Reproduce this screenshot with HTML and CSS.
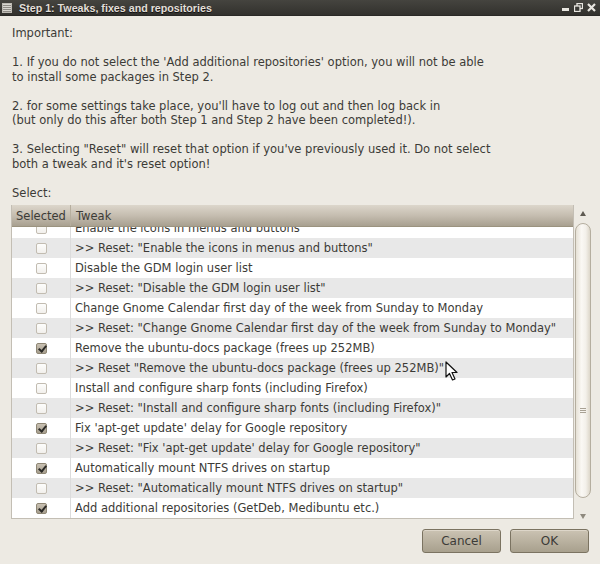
FILE: index.html
```html
<!DOCTYPE html>
<html>
<head>
<meta charset="utf-8">
<link rel="stylesheet" href="styles.css">
</head>
<body>
<div class="window">
  <div class="titlebar">
    <span class="app-icon"></span>
    <span class="title">Step 1: Tweaks, fixes and repositories</span>
    <div class="controls">
      <svg width="9" height="9" viewBox="0 0 9 9"><rect x="1" y="5" width="7" height="3" fill="#e8e6e0"/></svg>
      <svg width="9" height="9" viewBox="0 0 9 9"><rect x="3" y="0.5" width="5.5" height="5" fill="none" stroke="#e8e6e0" stroke-width="1.3"/><rect x="0.5" y="3" width="5.5" height="5.5" fill="#3a3935" stroke="#e8e6e0" stroke-width="1.3"/></svg>
      <svg width="9" height="9" viewBox="0 0 9 9"><path d="M1 1 L8 8 M8 1 L1 8" stroke="#e8e6e0" stroke-width="2.2"/></svg>
    </div>
  </div>
  <div class="content">
    <p class="intro">Important:<br><br>1. If you do not select the 'Add additional repositories' option, you will not be able<br>to install some packages in Step 2.<br><br>2. for some settings take place, you'll have to log out and then log back in<br>(but only do this after both Step 1 and Step 2 have been completed!).<br><br>3. Selecting "Reset" will reset that option if you've previously used it. Do not select<br>both a tweak and it's reset option!<br><br>Select:</p>
    <div class="listwrap">
      <div class="list">
        <div class="header">
          <div class="hcell sel">Selected</div>
          <div class="hcell tw">Tweak</div>
        </div>
        <div class="viewport">
          <div class="rows">
            <div class="row"><div class="cell sel"><span class="cb"></span></div><div class="cell tw">Enable the icons in menus and buttons</div></div>
            <div class="row"><div class="cell sel"><span class="cb"></span></div><div class="cell tw">&gt;&gt; Reset: "Enable the icons in menus and buttons"</div></div>
            <div class="row"><div class="cell sel"><span class="cb"></span></div><div class="cell tw">Disable the GDM login user list</div></div>
            <div class="row"><div class="cell sel"><span class="cb"></span></div><div class="cell tw">&gt;&gt; Reset: "Disable the GDM login user list"</div></div>
            <div class="row"><div class="cell sel"><span class="cb"></span></div><div class="cell tw">Change Gnome Calendar first day of the week from Sunday to Monday</div></div>
            <div class="row"><div class="cell sel"><span class="cb"></span></div><div class="cell tw">&gt;&gt; Reset: "Change Gnome Calendar first day of the week from Sunday to Monday"</div></div>
            <div class="row"><div class="cell sel"><span class="cb on"></span></div><div class="cell tw">Remove the ubuntu-docs package (frees up 252MB)</div></div>
            <div class="row"><div class="cell sel"><span class="cb"></span></div><div class="cell tw">&gt;&gt; Reset "Remove the ubuntu-docs package (frees up 252MB)"</div></div>
            <div class="row"><div class="cell sel"><span class="cb"></span></div><div class="cell tw">Install and configure sharp fonts (including Firefox)</div></div>
            <div class="row"><div class="cell sel"><span class="cb"></span></div><div class="cell tw">&gt;&gt; Reset: "Install and configure sharp fonts (including Firefox)"</div></div>
            <div class="row"><div class="cell sel"><span class="cb on"></span></div><div class="cell tw">Fix 'apt-get update' delay for Google repository</div></div>
            <div class="row"><div class="cell sel"><span class="cb"></span></div><div class="cell tw">&gt;&gt; Reset: "Fix 'apt-get update' delay for Google repository"</div></div>
            <div class="row"><div class="cell sel"><span class="cb on"></span></div><div class="cell tw">Automatically mount NTFS drives on startup</div></div>
            <div class="row"><div class="cell sel"><span class="cb"></span></div><div class="cell tw">&gt;&gt; Reset: "Automatically mount NTFS drives on startup"</div></div>
            <div class="row"><div class="cell sel"><span class="cb on"></span></div><div class="cell tw">Add additional repositories (GetDeb, Medibuntu etc.)</div></div>
          </div>
        </div>
      </div>
      <div class="scrollbar">
        <span class="arrow up"></span>
        <div class="trough"><div class="thumb"><span class="grip"></span></div></div>
        <span class="arrow down"></span>
      </div>
    </div>
    <div class="buttons">
      <button class="btn">Cancel</button>
      <button class="btn">OK</button>
    </div>
  </div>
  <svg class="cursor" width="14" height="20" viewBox="0 0 14 20"><path d="M1 1 L1 16 L4.5 12.5 L7.5 19 L10 18 L7 11.5 L12 11.5 Z" fill="#fff" stroke="#111" stroke-width="1.2" stroke-linejoin="round"/></svg>
</div>
</body>
</html>
```
FILE: styles.css
```css
html, body {
  margin: 0;
  padding: 0;
}
body {
  background: #edeae3;
  font-family: "DejaVu Sans", sans-serif;
  font-size: 11.5px;
  color: #3c3b37;
}
.window {
  position: relative;
  width: 600px;
  height: 564px;
  overflow: hidden;
}
.titlebar {
  height: 15px;
  background: linear-gradient(#45443f, #32312d);
  display: flex;
  align-items: center;
  padding: 0 4px 0 2px;
  border-bottom: 1px solid #2a2926;
}
.app-icon {
  width: 10px;
  height: 10px;
  margin-right: 7px;
  background: repeating-linear-gradient(#d8d6d0 0 1px, #8f8c86 1px 2px);
  border: 1px solid #bdbab3;
  box-sizing: border-box;
}
.title {
  color: #e2dfd7;
  font-family: "Liberation Sans", Arial, sans-serif;
  font-weight: bold;
  font-size: 10.7px;
  text-shadow: 0 1px 0 #111;
  flex: 1;
}
.controls {
  display: flex;
  gap: 4px;
  align-items: center;
}
.content {
  padding: 10px 12px 0 12px;
}
.intro {
  margin: 0;
  line-height: 14.5px;
}
.listwrap {
  display: flex;
  margin-top: 5px;
  margin-left: -1px;
  margin-right: -10px;
  height: 314px;
}
.list {
  width: 563px;
  border: 1px solid #c3beb4;
  border-top: none;
  box-sizing: border-box;
  background: #fff;
  display: flex;
  flex-direction: column;
}
.header {
  height: 22px;
  display: flex;
  background: linear-gradient(#dcd6cb, #c5bdb0 50%, #a8a090);
  border-bottom: 1px solid #9b937f;
  box-sizing: border-box;
  color: #3c3b37;
}
.hcell {
  display: flex;
  align-items: center;
}
.hcell.sel {
  width: 54px;
  padding-left: 4px;
  border-right: 1px solid #b6ae9e;
}
.hcell.tw {
  padding-left: 5px;
  flex: 1;
}
.viewport {
  flex: 1;
  overflow: hidden;
}
.rows {
  margin-top: -9px;
}
.row {
  height: 20px;
  display: flex;
}
.row:nth-child(even) {
  background: #e8e8e8;
}
.cell {
  display: flex;
  align-items: center;
}
.cell.sel {
  width: 58px;
  justify-content: center;
  border-right: 1px solid #dcdcdc;
}
.cell.tw {
  padding-left: 4px;
  white-space: nowrap;
}
.cb {
  width: 11px;
  height: 11px;
  box-sizing: border-box;
  border: 1px solid #c2bcb1;
  border-radius: 2px;
  background: linear-gradient(#fdfdfc, #f2f0ec);
  position: relative;
}
.cb.on {
  background: linear-gradient(#c9c1b3, #a69e8e);
  border-color: #8e8674;
}
.cb.on::after {
  content: "";
  position: absolute;
  left: 3px;
  top: 0px;
  width: 3px;
  height: 6px;
  border-right: 2px solid #2b2a27;
  border-bottom: 2px solid #2b2a27;
  transform: rotate(40deg);
}
.scrollbar {
  width: 18px;
  display: flex;
  flex-direction: column;
  align-items: center;
  padding-top: 6px;
  box-sizing: border-box;
}
.arrow {
  width: 0;
  height: 0;
  border-left: 3px solid transparent;
  border-right: 3px solid transparent;
}
.arrow.up {
  border-bottom: 5px solid #5e5a52;
}
.arrow.down {
  border-top: 5px solid #8e897e;
  margin-top: 7px;
}
.trough {
  flex: 1;
  width: 16px;
  padding-top: 7px;
  box-sizing: border-box;
}
.thumb {
  width: 16px;
  height: 275px;
  border: 1px solid #b5ae9f;
  border-radius: 8px;
  box-sizing: border-box;
  background: linear-gradient(90deg, #e6e1d6, #faf8f4 40%, #f3f0ea 70%, #ddd7ca);
  position: relative;
}
.grip {
  position: absolute;
  left: 4px;
  top: 184px;
  width: 6px;
  height: 5px;
  background: repeating-linear-gradient(#a8a194 0 1px, transparent 1px 2px);
}
.buttons {
  display: flex;
  justify-content: flex-end;
  gap: 9px;
  margin-top: 10px;
  margin-right: -1px;
}
.btn {
  width: 79px;
  height: 24px;
  border: 1px solid #7b7361;
  border-radius: 3px;
  background: linear-gradient(#cbc3b3, #a8a08d);
  color: #3c3b37;
  font-family: "DejaVu Sans", sans-serif;
  font-size: 12px;
  box-shadow: inset 0 1px 0 #ddd6c9;
  padding: 0;
}
.cursor {
  position: absolute;
  left: 445px;
  top: 361px;
}
```
